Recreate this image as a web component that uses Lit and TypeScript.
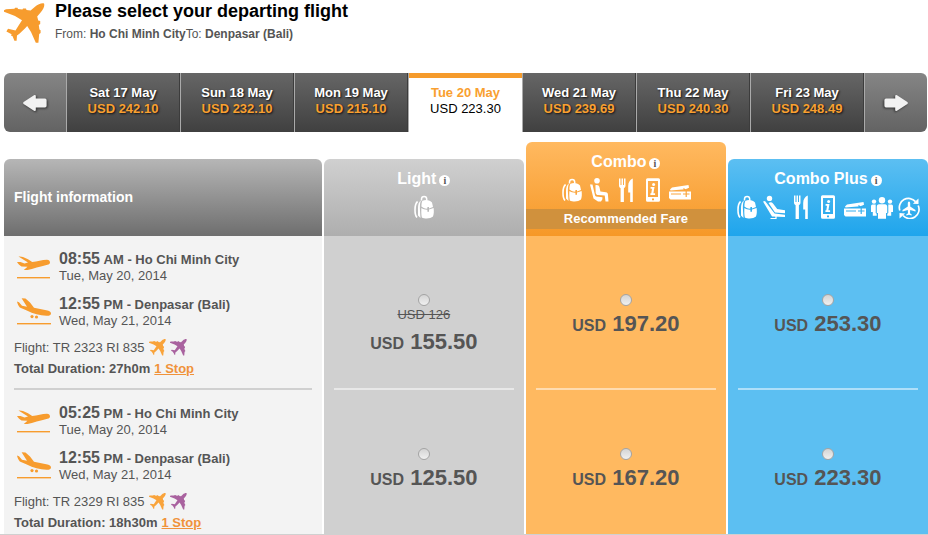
import { LitElement, html, css, svg, nothing, TemplateResult } from "lit";
import { customElement, property } from "lit/decorators.js";
import { classMap } from "lit/directives/class-map.js";

const PLANE =
  "M40 .4C37.500-.2 34 1.200 31 3.800L26.600 7.600 22.500 7 22 5.400 19 5.400 18.500 6.500 14 6 13.500 4.800 11 4.800 10.500 5.800 2 6.200 0 7.200 0 8.800 11 13 18 17.200C16 20.500 13.500 24 11.500 27.400L4 25.800 2.400 28.400 7.600 31.200 7 32.600 8.600 33.200 10.400 37.800 12.600 37.800 13 32.600C16 30.500 20 26.500 23.200 23L27 29 31.800 39.800 34.400 39.800 35.200 31 36.600 30 36.600 27.200 35.400 26.600 34.800 22 36.200 21 36.200 18 34.200 17.400 33.200 13.400 37 9C39.300 6.300 41 3 40 .4Z";

const icons: Record<string, TemplateResult> = {
  bag: svg`
    <path d="M8.5 5.5V4a2.6 2.6 0 0 1 5.200 0v1.500" fill="none" stroke="#fff" stroke-width="1.500"/>
    <path d="M4.600 6.500C2.600 8 2 11 2 15s.6 6 2 7.500" fill="none" stroke="#fff" stroke-width="1.600"/>
    <path d="M8 5.600C5.800 7 5 10 5 13v7.500L7.500 23l-.6-9.500C6.900 10 7 8 8 5.600Z" fill="#fff"/>
    <path d="M9.200 6C12 4.200 17 4.600 19 7.600l1 4.400-4 1.400v-1.400h-1.600v1.600c-2.400.2-4.400-.6-6-2 0-2 .2-4 .8-5.600Z" fill="#fff"/>
    <path d="M8.400 13c1.800 1.300 3.800 1.800 6 1.700v2H16v-2.200l4.600-1.500c.4 3 .4 6-.6 8.600-2.600 2.200-8.200 2.400-11.200.8-.6-3-.6-6.200-.4-9.400Z" fill="#fff"/>`,
  seat: svg`
    <circle cx="9" cy="2.800" r="2.800" fill="#fff"/>
    <path d="M7.400 7.200c2-.8 3.600 0 4 1.800l1 4.600 5.600.6c1.200.2 1.800 1 1.900 2l.6 7.400h-3l-.8-6-6.500-.5c-1.400-.2-2.200-1-2.500-2.200Z" fill="#fff"/>
    <path d="M2 6.400h2.500l2.600 11 .8 1.200 6.500.6v2l-1.400 2.400h-3l-4.500-3Z" fill="#fff"/>`,
  recline: svg`
    <circle cx="6.500" cy="3.400" r="2.700" fill="#fff"/>
    <path d="M5.600 8c1.500-1.200 3.400-1 4.400.5l4.200 5.500 7.800 1.200v3L12 17.600Z" fill="#fff"/>
    <path d="M0 6.500 2 6l9.600 12.600L22 19.800V22L9 21.400Z" fill="#fff"/>
    <path d="M13 21v2.500H7.500" fill="none" stroke="#fff" stroke-width="1.200"/>`,
  meal: svg`
    <path d="M4 .5h1.500V7h1V.5H8V7h1V.5h1.500v7.300c0 1.200-.8 2-1.600 2.400V24H5.600V10.200C4.800 9.800 4 9 4 7.800Z" fill="#fff"/>
    <path d="M17.800.5V24h-2.600v-9.500h-2V8c0-4 2-6.500 4.600-7.500Z" fill="#fff"/>`,
  phone: svg`
    <path fill-rule="evenodd" d="M5.500.2h11A1.500 1.500 0 0 1 18 1.700v20.600a1.500 1.500 0 0 1-1.500 1.500h-11A1.500 1.500 0 0 1 4 22.300V1.700A1.500 1.500 0 0 1 5.500.2ZM6 3v16h10V3ZM10 20.500v1.800h2v-1.800Z" fill="#fff"/>
    <circle cx="11.600" cy="6.400" r="1.500" fill="#fff"/>
    <path d="M8.600 9h3.900l-1.100 6.200h1.700V17H8.400v-1.800h.9L10 10.800H8.600Z" fill="#fff"/>`,
  tickets: svg`
    <path d="M1 11.500 3 9.500 19.500 7l.6 3-4 1.200L1.500 12.600Z" fill="#fff"/>
    <path d="M0 13.500h22v8H1.500L0 20Z" fill="#fff"/>
    <path d="M2 16h10" stroke="currentColor" stroke-width="1" fill="none"/>
    <path d="M14.500 10.500l2 2M20 10l-2 2.500M17.200 13v6M14 16h6.500" stroke="currentColor" stroke-width="1.200" fill="none"/>`,
  group: svg`
    <circle cx="11" cy="5.200" r="3.200" fill="#fff"/><circle cx="3" cy="6.600" r="2.200" fill="#fff"/><circle cx="19" cy="6.600" r="2.200" fill="#fff"/>
    <path d="M8 9.200h6c1.400 0 2.200 1 2.200 2.400V18H15v5.800H7V18H5.800v-6.400C5.800 10.200 6.600 9.200 8 9.200Z" fill="#fff"/>
    <path d="M1.500 9.600h3.200V18l1 .8v2H1.800V17H0v-5.500c0-1 .6-1.900 1.500-1.900ZM20.500 9.600h-3.200V18l-1 .8v2h3.900V17H22v-5.500c0-1-.6-1.900-1.500-1.900Z" fill="#fff"/>`,
  transfer: svg`
    <path d="M1.800 15.500A9.200 9.200 0 0 1 17.500 6.600M20.200 10.500A9.200 9.200 0 0 1 5 20.500" fill="none" stroke="#fff" stroke-width="1.700"/>
    <path d="M20.500 3.500v5.600l-5.600-.4ZM1.500 23.600V18l5.600.4Z" fill="#fff"/>
    <path d="M11 6.500c.7 0 1.200.9 1.200 2v3l5.300 3.600v1.500l-5.300-1.700-.2 3.300 1.700 1.200v1.100L11 19.800l-2.700.7v-1.100l1.700-1.200-.2-3.300-5.300 1.700v-1.500l5.300-3.600v-3c0-1.100.5-2 1.200-2Z" fill="#fff"/>`,
};

const takeoff = svg`
  <path d="M1.500 5.600C2.600 5.200 4.500 5.500 6 6l5 2.200 4.200 2.800c5-.6 10-2 14.600-2.200 2-.1 3.200 1.200 3.200 2.600 0 1.300-1 2-2.600 2.400C23 15.600 16 17.800 10.500 19H6.800L10.500 15.800 4.500 15.400C2.500 14.200 1 12.700 0 11L3.500 11l4 1.400 3.500-.8Z"/>
  <rect y="26" width="33" height="1.400"/>`;
const landing = svg`
  <path d="M4.600 2.200 8.500 2.600 13 6.500l4 5.300 13.500 2.800c2.400.5 3.500 1.700 3.500 2.800 0 1.500-1.600 2.300-4 2.300-7 .1-13.500-1.900-20.200-5.200L2.800 11.500C1.200 9.500.4 7.500 0 5.600L2 6.200l3 3.600 5 1Z"/>
  <circle cx="15" cy="20.600" r="1.600"/><circle cx="19.500" cy="21" r="1.600"/>
  <rect y="27" width="34" height="1.400"/>`;

interface Fare { key: string; name: string; perks: string[]; note?: string }
const fares: Fare[] = [
  { key: "light", name: "Light", perks: ["bag"] },
  { key: "combo", name: "Combo", perks: ["bag", "seat", "meal", "phone", "tickets"], note: "Recommended Fare" },
  { key: "plus", name: "Combo Plus", perks: ["bag", "recline", "meal", "phone", "tickets", "group", "transfer"] },
];

const days = [
  ["Sat 17 May", "USD 242.10"],
  ["Sun 18 May", "USD 232.10"],
  ["Mon 19 May", "USD 215.10"],
  ["Tue 20 May", "USD 223.30"],
  ["Wed 21 May", "USD 239.69"],
  ["Thu 22 May", "USD 240.30"],
  ["Fri 23 May", "USD 248.49"],
];

const flights = [
  { time: "08:55", half: "AM", codes: "TR 2323 RI 835", duration: "27h0m", prices: ["155.50", "197.20", "253.30"], was: "USD 126" },
  { time: "05:25", half: "PM", codes: "TR 2329 RI 835", duration: "18h30m", prices: ["125.50", "167.20", "223.30"], was: "" },
];

@customElement("date-strip")
export class DateStrip extends LitElement {
  @property({ type: Number }) selected = 3;

  static styles = css`
    :host { display: block; }
    .strip { display: grid; grid-template-columns: 62px repeat(7, 1fr) 63px; border-radius: 6px; overflow: hidden; }
    button {
      margin: 0; padding: 12px 0 15px; border: 0; border-left: 1px solid #aaa; border-right: 1px solid #3c3c3c;
      font: bold 13px/16px "Liberation Sans", Arial, sans-serif; text-align: center; color: #fff;
      background: linear-gradient(#666, #404040); text-shadow: 1px 1px 2px #111; cursor: pointer;
    }
    .price { display: block; color: #f9a030; }
    .day { display: block; }
    .arrow { background: linear-gradient(#858585, #636363); display: flex; align-items: center; justify-content: center; padding: 0; }
    .arrow:first-child { border-left: 0; border-right: 0; }
    .arrow:last-child { border-right: 0; }
    .current { background: linear-gradient(#f59b2c 5px, #fff 5px); color: #f9a030; text-shadow: none; border-right: 0; }
    .current .price { color: #000; font-weight: normal; }
    svg { display: block; fill: #f2f2f2; filter: drop-shadow(1px 1px 1px #333); }
    .next { transform: scaleX(-1); }
  `;

  private arrow(label: string, cls: string) {
    return html`<button class="arrow" aria-label=${label}>
      <svg class=${cls} width="24" height="18" viewBox="0 0 24 18">
        <path d="M.6 8 11 1.200C12.200.6 12.800 1 12.800 2V4.600H22a1.600 1.600 0 0 1 1.600 1.600v5.600A1.600 1.600 0 0 1 22 13.400H12.800V16c0 1-.6 1.400-1.800.8L.6 10Q-.3 9 .6 8Z"/>
      </svg></button>`;
  }

  render() {
    return html`<nav class="strip" aria-label="Departure date">
      ${this.arrow("Previous days", "prev")}
      ${days.map(([day, price], i) => html`
        <button class=${classMap({ current: i === this.selected })} aria-current=${i === this.selected ? "date" : nothing}>
          <span class="day">${day}</span><span class="price">${price}</span>
        </button>`)}
      ${this.arrow("Next days", "next")}
    </nav>`;
  }
}

@customElement("app-root")
export class AppRoot extends LitElement {
  static styles = css`
    :host { display: block; font-family: "Liberation Sans", Arial, sans-serif; color: #555; background: #fff; }
    .page { border-bottom: 1px solid #d0d0d0; padding-left: 4px; }
    header { display: flex; gap: 10px; padding-top: 1px; height: 71px; box-sizing: border-box; }
    header svg { fill: #f79c2e; margin-top: 2px; }
    h1 { margin: 0; font-size: 18px; line-height: 20px; color: #000; }
    .route { margin: 0; padding-top: 5px; font-size: 12px; line-height: 16px; }
    date-strip { margin: 2px 1px 10px 0; }
    table { width: 100%; table-layout: fixed; border-collapse: separate; border-spacing: 0; }
    .info-col { width: 34.4%; }
    th, td { padding: 0; vertical-align: top; }
    thead th { vertical-align: bottom; }
    .fare { border-left: 2px solid #fff; }
    .head { border-radius: 6px 6px 0 0; color: #fff; height: 77px; box-sizing: border-box; padding-top: 10px; }
    .head.info { background: linear-gradient(#b6b6b6, #6e6e6e); padding: 28px 10px 0; text-align: left; font-size: 14px; line-height: 20px; }
    .head.light { background: linear-gradient(#d0d0d0, #aeaeae); color: #fff; }
    .head.combo { background: linear-gradient(#ffb960, #f69827); height: 94px; }
    .head.plus { background: linear-gradient(#5cbff2, #1fa5ec); }
    .name { display: flex; justify-content: center; align-items: center; gap: 3px; font-size: 16px; line-height: 20px; }
    .help {
      width: 11px; height: 11px; margin: 3px 0 0; padding: 0; border: 0; border-radius: 50%; background: #fff;
      color: #555; font: bold 10px/11px "Liberation Serif", serif; text-align: center;
    }
    .perks { display: flex; justify-content: center; gap: 5px; padding-top: 6px; }
    .light .perks { color: #bbb; }
    .combo .perks { color: #faa53e; }
    .plus .perks { color: #35aeee; }
    .perks svg, header svg, .leg svg { display: block; flex: none; }
    .note { margin-top: 7px; background: #d0913d; font-size: 13px; line-height: 20px; text-align: center; }
    tbody th { background: #f3f3f3; text-align: left; font-weight: normal; font-size: 13px; }
    td { background-clip: padding-box; text-align: center; }
    td.light { background-color: #d0d0d0; }
    td.combo { background-color: #ffb960; }
    td.plus { background-color: #5cbff2; }
    .cell { margin: 0 10px; height: 154px; box-sizing: border-box; border-bottom: 2px solid #d0d0d0; }
    .fare .cell { border-color: rgba(255, 255, 255, 0.5); padding-top: 58px; }
    tr:last-child .cell { border-bottom: 0; height: 144px; }
    th .cell { padding-top: 15px; }
    .leg { display: flex; gap: 8px; padding-left: 3px; margin-bottom: 12px; line-height: 16px; }
    .leg svg { fill: #f79c2e; }
    .leg p, .meta { margin: 0; }
    .clock { font-size: 16px; }
    .legs { height: 86px; }
    .meta { line-height: 21px; display: flex; align-items: center; }
    .meta svg { margin-left: 4px; }
    .orange { fill: #f9a33a; }
    .purple { fill: #a9629f; }
    a { color: #f0923a; font-weight: bold; margin-left: 4px; }
    label { display: block; }
    input {
      appearance: none; display: block; width: 12px; height: 12px; margin: 0 auto; border-radius: 50%;
      border: 1px solid #a4a4a4; background: linear-gradient(#d4d4d4, #f0f0f0);
    }
    .was { display: block; font-size: 13px; line-height: 18px; text-decoration: line-through; }
    .amount { display: block; font-size: 22px; line-height: 24px; font-weight: bold; padding-top: 6px; color: #555; }
    .amount small { font-size: 16px; }
  `;

  private plane(size: number, cls = "") {
    return html`<svg class=${cls} width=${size} height=${size} viewBox="0 0 41 41" aria-hidden="true"><path d=${PLANE}/></svg>`;
  }

  private leg(icon: TemplateResult, time: string, half: string, place: string, date: string) {
    return html`<div class="leg">
      <svg width="34" height="30" viewBox="0 0 34 30" aria-hidden="true">${icon}</svg>
      <div><p><b class="clock">${time}</b> <b>${half} - ${place}</b></p><p>${date}</p></div>
    </div>`;
  }

  render() {
    return html`<main class="page">
      <header>
        ${this.plane(41)}
        <div>
          <h1>Please select your departing flight</h1>
          <p class="route">From: <b>Ho Chi Minh City</b>To: <b>Denpasar (Bali)</b></p>
        </div>
      </header>
      <date-strip></date-strip>
      <table>
        <colgroup><col class="info-col"><col><col><col></colgroup>
        <thead><tr>
          <th scope="col"><div class="head info">Flight information</div></th>
          ${fares.map((f) => html`<th class="fare" scope="col"><div class="head ${f.key}">
            <div class="name">${f.name}<button class="help" aria-label="About ${f.name}">i</button></div>
            <div class="perks">${f.perks.map((p) => html`<svg width="22" height="24" viewBox="0 0 22 24" aria-hidden="true">${icons[p]}</svg>`)}</div>
            ${f.note ? html`<div class="note">${f.note}</div>` : nothing}
          </div></th>`)}
        </tr></thead>
        <tbody>
          ${flights.map((fl) => html`<tr>
            <th scope="row"><div class="cell">
              <div class="legs">
                ${this.leg(takeoff, fl.time, fl.half, "Ho Chi Minh City", "Tue, May 20, 2014")}
                ${this.leg(landing, "12:55", "PM", "Denpasar (Bali)", "Wed, May 21, 2014")}
              </div>
              <p class="meta">Flight: ${fl.codes} ${this.plane(17, "orange")}${this.plane(17, "purple")}</p>
              <p class="meta"><b>Total Duration: ${fl.duration}</b> <a href="#stops">1 Stop</a></p>
            </div></th>
            ${fl.prices.map((price, i) => html`<td class="fare ${fares[i].key}"><div class="cell">
              <label>
                <input type="radio" name="fare">
                ${i === 0 && fl.was ? html`<s class="was">${fl.was}</s>` : nothing}
                <span class="amount"><small>USD</small> ${price}</span>
              </label>
            </div></td>`)}
          </tr>`)}
        </tbody>
      </table>
    </main>`;
  }
}
